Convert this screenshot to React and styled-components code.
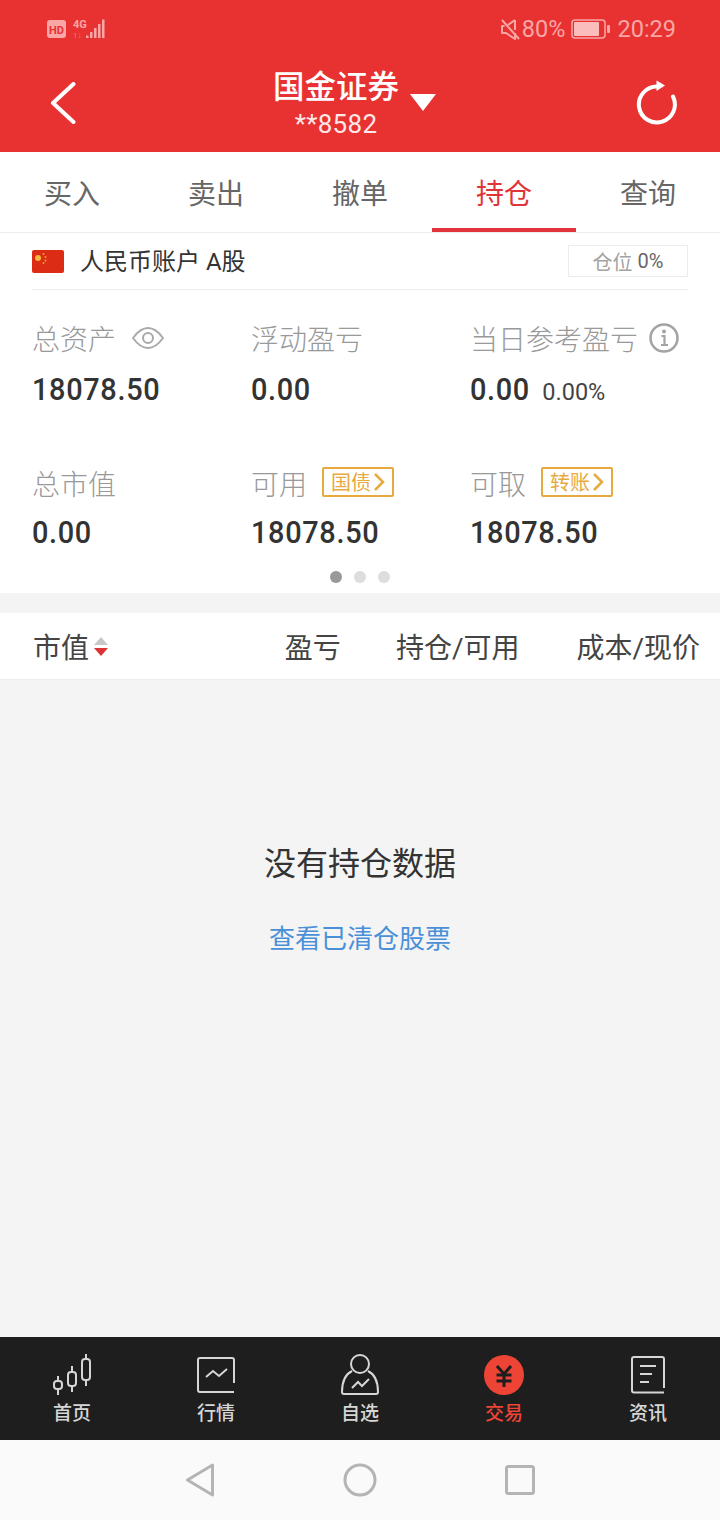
import React from 'react';
import styled, {createGlobalStyle} from 'styled-components';

const CJK = `Roboto, 'Noto Sans CJK SC', sans-serif`;

const GlobalStyle = createGlobalStyle`
  html, body {
    margin: 0;
    padding: 0;
    background: #f4f4f4;
  }
  * {
    box-sizing: border-box;
  }
  body {
    font-family: ${CJK};
  }
`;

const Page = styled.div`
  width: 720px;
  height: 1520px;
  display: flex;
  flex-direction: column;
  overflow: hidden;
`;

const Head = styled.header`
  height: 152px;
  flex-shrink: 0;
  background: #e83232;
  color: #fff;
  display: flex;
  flex-direction: column;
`;

const StatusBar = styled.div`
  height: 58px;
  padding: 0 44px 0 47px;
  display: flex;
  align-items: center;
  justify-content: space-between;
  color: #f9a6a6;
`;

const StatusGroup = styled.div`
  display: flex;
  align-items: center;
  gap: 6px;
`;

const MuteSlot = styled.span`
  display: flex;
  margin-right: -5px;
`;

const StatusText = styled.span`
  font-size: 23.5px;
  line-height: 28px;
`;

const TitleBar = styled.div`
  flex: 1;
  padding: 0 42px 5px 50px;
  display: flex;
  align-items: center;
  justify-content: space-between;
`;

const TitleBlock = styled.div`
  position: relative;
  display: flex;
  flex-direction: column;
  align-items: center;
  margin: 7px 0 0 -40px;
`;

const TitleText = styled.div`
  font-size: 31.5px;
  line-height: 36px;
  font-weight: 500;
`;

const SubTitle = styled.div`
  font-size: 26px;
  line-height: 36px;
  letter-spacing: 0.3px;
  color: #fde8e8;
`;

const Caret = styled.span`
  position: absolute;
  left: 137px;
  top: 24px;
  width: 0;
  height: 0;
  border-left: 13.5px solid transparent;
  border-right: 13.5px solid transparent;
  border-top: 17px solid #fff;
`;

const Tabs = styled.nav`
  height: 81px;
  flex-shrink: 0;
  background: #fff;
  border-bottom: 1px solid #ececec;
  display: grid;
  grid-template-columns: repeat(5, 144px);
`;

const Tab = styled.div`
  height: 80px;
  display: flex;
  align-items: center;
  justify-content: center;
  font-size: 28px;
  padding-top: 3px;
  color: ${p => (p.$active ? '#e0343a' : '#666')};
  border-bottom: 4px solid ${p => (p.$active ? '#e0343a' : 'transparent')};
`;

const Summary = styled.section`
  height: 360px;
  flex-shrink: 0;
  background: #fff;
  padding: 0 32px;
  display: flex;
  flex-direction: column;
`;

const AccountRow = styled.div`
  height: 57px;
  flex-shrink: 0;
  border-bottom: 1px solid #ececec;
  display: flex;
  align-items: center;
  justify-content: space-between;
`;

const AccountName = styled.div`
  display: flex;
  align-items: center;
  gap: 16px;
  font-size: 24px;
  line-height: 30px;
  padding-top: 1px;
  color: #333;
`;

const RatioBox = styled.div`
  width: 120px;
  height: 32px;
  border: 1px solid #ececec;
  display: flex;
  align-items: center;
  justify-content: center;
  gap: 5px;
  font-size: 20px;
  color: #666;
`;

const RatioLabel = styled.span`
  color: #a3a3a3;
`;

const StatGrid = styled.div`
  display: grid;
  grid-template-columns: 219px 219px 218px;
  grid-template-rows: 145px 93px;
  padding-top: 29px;
  flex-shrink: 0;
`;

const Stat = styled.div`
  display: flex;
  flex-direction: column;
`;

const LabelRow = styled.div`
  height: 38px;
  display: flex;
  align-items: center;
  font-size: 28px;
  font-weight: 300;
  color: #999;
  white-space: nowrap;
`;

const LabelIcon = styled.span`
  display: flex;
  margin-left: ${p => p.$gap}px;
`;

const ValueRow = styled.div`
  margin-top: ${p => (p.$tight ? 12 : 14)}px;
  height: 38px;
  display: flex;
  align-items: baseline;
  gap: 8px;
  color: #333;
`;

const Value = styled.span`
  display: inline-block;
  font-size: 31px;
  line-height: 38px;
  font-weight: 500;
  letter-spacing: 0.7px;
  transform: scaleX(0.933);
  transform-origin: left center;
`;

const Percent = styled.span`
  font-size: 23.5px;
  color: #444;
`;

const Tag = styled.span`
  margin: -3px 0 0 15px;
  width: 72px;
  height: 30px;
  border: 2px solid #e8a93f;
  border-radius: 2px;
  display: flex;
  align-items: center;
  justify-content: center;
  gap: 2px;
  font-size: 20px;
  font-weight: 400;
  color: #e8a93f;
`;

const Dots = styled.div`
  display: flex;
  justify-content: center;
  gap: 12px;
  margin-top: 14px;
`;

const Dot = styled.span`
  width: 12px;
  height: 12px;
  border-radius: 50%;
  background: ${p => (p.$active ? '#999' : '#ddd')};
`;

const TableHead = styled.div`
  margin-top: 20px;
  height: 67px;
  flex-shrink: 0;
  background: #fff;
  border-bottom: 1px solid #ececec;
  padding: 0 20px 0 33px;
  display: flex;
  align-items: center;
  gap: 57px;
  font-size: 28px;
  color: #444;
`;

const SortCell = styled.div`
  margin-right: auto;
  display: flex;
  align-items: center;
  gap: 5px;
`;

const ProfitCell = styled.span`
  margin-right: -2px;
`;

const SortArrows = styled.span`
  display: flex;
  flex-direction: column;
  gap: 3px;
`;

const Arrow = styled.span`
  width: 0;
  height: 0;
  border-left: 7px solid transparent;
  border-right: 7px solid transparent;
  border-bottom: ${p => (p.$up ? '8px solid #c8c8c8' : 'none')};
  border-top: ${p => (p.$up ? 'none' : '8px solid #dc3434')};
`;

const Empty = styled.main`
  flex: 1;
  background: #f4f4f4;
  display: flex;
  flex-direction: column;
  align-items: center;
  padding-top: 162px;
`;

const EmptyText = styled.div`
  font-size: 32px;
  line-height: 44px;
  color: #333;
`;

const EmptyLink = styled.a`
  margin-top: 35px;
  font-size: 26px;
  line-height: 36px;
  color: #4a90d9;
`;

const TabBar = styled.nav`
  height: 103px;
  flex-shrink: 0;
  background: #1e1e1e;
  display: grid;
  grid-template-columns: repeat(5, 144px);
`;

const BarItem = styled.div`
  display: flex;
  flex-direction: column;
  align-items: center;
  padding-top: 17px;
  color: ${p => (p.$active ? '#ee4436' : '#d6d6d6')};
`;

const BarIcon = styled.div`
  height: 42px;
  display: flex;
  align-items: center;
  justify-content: center;
`;

const BarLabel = styled.span`
  margin-top: 5px;
  font-size: 19px;
  line-height: 26px;
  font-weight: 500;
`;

const SystemNav = styled.div`
  height: 80px;
  flex-shrink: 0;
  background: #fafafa;
  display: grid;
  grid-template-columns: repeat(3, 160px);
  padding: 0 120px;
  align-items: center;
  justify-items: center;
`;

const HdIcon = () => (
  <svg width="60" height="24" viewBox="0 0 60 24">
    <rect x="0" y="3" width="19" height="18" rx="3" fill="#f9a6a6" />
    <text x="9.5" y="17" textAnchor="middle" fontFamily="Roboto" fontWeight="700" fontSize="11" fill="#e83232">HD</text>
    <text x="26" y="11" fontFamily="Roboto" fontWeight="700" fontSize="11" fill="#f9a6a6">4G</text>
    <text x="26" y="21" fontFamily="Roboto" fontSize="8" fill="#f2797a">1↓</text>
    <path d="M39 18.500h2.500V21H39zM43 15h2.500v6H43zM47 11h2.500v10H47zM51 7h2.500v14H51zM55 2.500h2.500V21H55z" fill="#f9a6a6" />
  </svg>
);

const MuteIcon = () => (
  <svg width="22" height="24" viewBox="0 0 22 24" fill="none" stroke="#f9a6a6" strokeWidth="2">
    <path d="M3 3l17 19" />
    <path d="M16 3L9 8M5.500 9H3v7h4l9 6v-6M16 3v10" strokeLinejoin="round" />
  </svg>
);

const BatteryIcon = () => (
  <svg width="40" height="20" viewBox="0 0 40 20">
    <rect x="1" y="1" width="33" height="18" rx="3" fill="none" stroke="#f9a6a6" strokeWidth="1.500" />
    <rect x="3" y="3" width="25" height="14" rx="1" fill="#fbbcbc" />
    <rect x="36" y="6" width="3" height="8" rx="1" fill="#f9a6a6" />
  </svg>
);

const BackIcon = () => (
  <svg width="26" height="42" viewBox="0 0 26 42" fill="none" stroke="#fff" strokeWidth="4">
    <path d="M23.500 2L3 21l20.500 19" strokeLinecap="round" strokeLinejoin="round" />
  </svg>
);

const RefreshIcon = () => (
  <svg width="42" height="46" viewBox="0 0 42 46" fill="none">
    <path d="M37 16.500A18 18 0 1 1 21 6.500" stroke="#fff" strokeWidth="4" strokeLinecap="round" />
    <path d="M20.500 0.500L29 5.500L20.500 11z" fill="#fff" />
  </svg>
);

const Flag = () => (
  <svg width="32" height="23" viewBox="0 0 32 23">
    <rect width="32" height="23" rx="2" fill="#dd2c16" />
    <circle cx="6" cy="8" r="3" fill="#f6b73c" />
    <circle cx="11.500" cy="4" r="1" fill="#f0a030" />
    <circle cx="13.500" cy="7" r="1" fill="#f0a030" />
    <circle cx="13.500" cy="10.500" r="1" fill="#f0a030" />
    <circle cx="11.500" cy="13" r="1" fill="#f0a030" />
  </svg>
);

const EyeIcon = () => (
  <svg width="32" height="24" viewBox="0 0 32 24" fill="none" stroke="#aaa" strokeWidth="2">
    <path d="M1 12C6 5 11 2 16 2s10 3 15 10c-5 7-10 10-15 10S6 19 1 12z" />
    <circle cx="16" cy="12" r="5" />
  </svg>
);

const InfoIcon = () => (
  <svg width="30" height="30" viewBox="0 0 30 30" fill="none">
    <circle cx="15" cy="15" r="13.500" stroke="#a3a3a3" strokeWidth="2.500" />
    <circle cx="15" cy="8.500" r="2" fill="#a3a3a3" />
    <path d="M12.500 13H15.500V21M12 22h7" stroke="#a3a3a3" strokeWidth="2.200" />
  </svg>
);

const Chevron = () => (
  <svg width="12" height="20" viewBox="0 0 12 20" fill="none" stroke="#e8a93f" strokeWidth="2.500">
    <path d="M2 2l8 8-8 8" />
  </svg>
);

const CandleIcon = () => (
  <svg width="40" height="42" viewBox="0 0 40 42" fill="none" stroke="#d6d6d6" strokeWidth="2">
    <rect x="2" y="27" width="8" height="8" rx="3" />
    <path d="M6 22v5M6 35v6" />
    <rect x="16" y="18" width="8" height="14" rx="3" />
    <path d="M20 12v6M20 32v6" />
    <rect x="30" y="5" width="8" height="21" rx="3" />
    <path d="M34 0v5M34 26v6" />
  </svg>
);

const ChartIcon = () => (
  <svg width="38" height="36" viewBox="0 0 38 36" fill="none" stroke="#d6d6d6" strokeWidth="2">
    <path d="M37 26V3a2 2 0 0 0-2-2H3a2 2 0 0 0-2 2v30a2 2 0 0 0 2 2h34" />
    <path d="M9 20l7-6 6 5 8-7" />
  </svg>
);

const PersonIcon = () => (
  <svg width="40" height="42" viewBox="0 0 40 42" fill="none" stroke="#d6d6d6" strokeWidth="2">
    <circle cx="20" cy="10" r="9" />
    <path d="M12 17C6 20 2 26 2 38a2 2 0 0 0 2 2h32a2 2 0 0 0 2-2c0-12-4-18-10-21" />
    <path d="M12 34l6-6 4 4 7-7" />
  </svg>
);

const TradeIcon = () => (
  <svg width="40" height="40" viewBox="0 0 40 40">
    <circle cx="20" cy="20" r="20" fill="#ee4436" />
    <path d="M13 11l7 8 7-8M12.500 20h15M12.500 26h15M20 19v13" fill="none" stroke="#1e1e1e" strokeWidth="3" />
  </svg>
);

const NewsIcon = () => (
  <svg width="34" height="38" viewBox="0 0 34 38" fill="none" stroke="#d6d6d6" strokeWidth="2">
    <path d="M33 36.500H3a2 2 0 0 1-2-2V3a2 2 0 0 1 2-2h28a2 2 0 0 1 2 2v29" />
    <path d="M9 10h16M9 18h12M9 26h9" />
  </svg>
);

const NavBack = () => (
  <svg width="30" height="34" viewBox="0 0 30 34" fill="none" stroke="#b4b4b4" strokeWidth="3">
    <path d="M27.500 2v30L2.500 17z" strokeLinejoin="round" />
  </svg>
);

const NavHome = () => (
  <svg width="34" height="34" viewBox="0 0 34 34" fill="none" stroke="#b4b4b4" strokeWidth="3">
    <circle cx="17" cy="17" r="15" />
  </svg>
);

const NavRecent = () => (
  <svg width="30" height="30" viewBox="0 0 30 30" fill="none" stroke="#b4b4b4" strokeWidth="3">
    <rect x="1.500" y="1.500" width="27" height="27" rx="2" />
  </svg>
);

const tabs = ['买入', '卖出', '撤单', '持仓', '查询'];

const barItems = [
  {label: '首页', Icon: CandleIcon},
  {label: '行情', Icon: ChartIcon},
  {label: '自选', Icon: PersonIcon},
  {label: '交易', Icon: TradeIcon, active: true},
  {label: '资讯', Icon: NewsIcon},
];

const App = () => {
  return (
    <Page>
      <GlobalStyle />
      <Head>
        <StatusBar>
          <HdIcon />
          <StatusGroup>
            <MuteSlot>
              <MuteIcon />
            </MuteSlot>
            <StatusText>80%</StatusText>
            <BatteryIcon />
            <StatusText>20:29</StatusText>
          </StatusGroup>
        </StatusBar>
        <TitleBar>
          <BackIcon />
          <TitleBlock>
            <TitleText>国金证券</TitleText>
            <SubTitle>**8582</SubTitle>
            <Caret />
          </TitleBlock>
          <RefreshIcon />
        </TitleBar>
      </Head>
      <Tabs>
        {tabs.map(t => (
          <Tab key={t} $active={t === '持仓'}>
            {t}
          </Tab>
        ))}
      </Tabs>
      <Summary>
        <AccountRow>
          <AccountName>
            <Flag />
            人民币账户 A股
          </AccountName>
          <RatioBox>
            <RatioLabel>仓位</RatioLabel> 0%
          </RatioBox>
        </AccountRow>
        <StatGrid>
          <Stat>
            <LabelRow>
              总资产
              <LabelIcon $gap={16}>
                <EyeIcon />
              </LabelIcon>
            </LabelRow>
            <ValueRow>
              <Value>18078.50</Value>
            </ValueRow>
          </Stat>
          <Stat>
            <LabelRow>浮动盈亏</LabelRow>
            <ValueRow>
              <Value>0.00</Value>
            </ValueRow>
          </Stat>
          <Stat>
            <LabelRow>
              当日参考盈亏
              <LabelIcon $gap={11}>
                <InfoIcon />
              </LabelIcon>
            </LabelRow>
            <ValueRow>
              <Value>0.00</Value>
              <Percent>0.00%</Percent>
            </ValueRow>
          </Stat>
          <Stat>
            <LabelRow>总市值</LabelRow>
            <ValueRow $tight>
              <Value>0.00</Value>
            </ValueRow>
          </Stat>
          <Stat>
            <LabelRow>
              可用
              <Tag>
                国债
                <Chevron />
              </Tag>
            </LabelRow>
            <ValueRow $tight>
              <Value>18078.50</Value>
            </ValueRow>
          </Stat>
          <Stat>
            <LabelRow>
              可取
              <Tag>
                转账
                <Chevron />
              </Tag>
            </LabelRow>
            <ValueRow $tight>
              <Value>18078.50</Value>
            </ValueRow>
          </Stat>
        </StatGrid>
        <Dots>
          <Dot $active />
          <Dot />
          <Dot />
        </Dots>
      </Summary>
      <TableHead>
        <SortCell>
          市值
          <SortArrows>
            <Arrow $up />
            <Arrow />
          </SortArrows>
        </SortCell>
        <ProfitCell>盈亏</ProfitCell>
        <span>持仓/可用</span>
        <span>成本/现价</span>
      </TableHead>
      <Empty>
        <EmptyText>没有持仓数据</EmptyText>
        <EmptyLink>查看已清仓股票</EmptyLink>
      </Empty>
      <TabBar>
        {barItems.map(({label, Icon, active}) => (
          <BarItem key={label} $active={active}>
            <BarIcon>
              <Icon />
            </BarIcon>
            <BarLabel>{label}</BarLabel>
          </BarItem>
        ))}
      </TabBar>
      <SystemNav>
        <NavBack />
        <NavHome />
        <NavRecent />
      </SystemNav>
    </Page>
  );
};

export default App;
